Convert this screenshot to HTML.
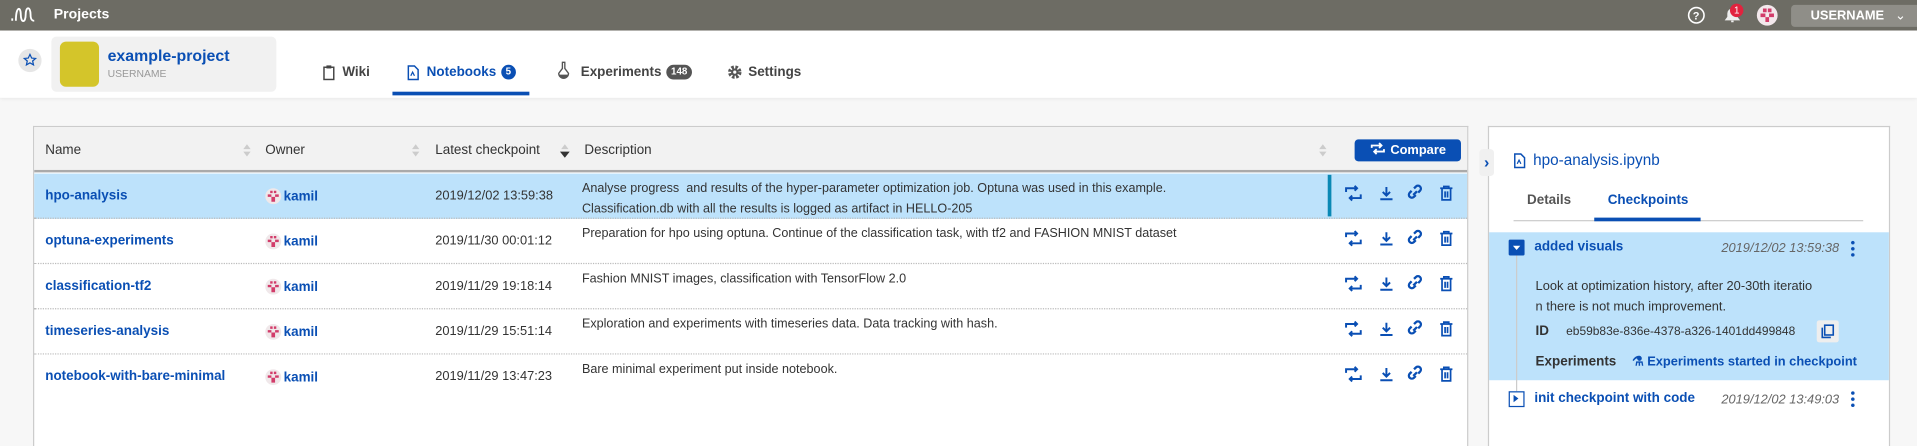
<!DOCTYPE html>
<html><head><meta charset="utf-8">
<style>
*{box-sizing:border-box;margin:0;padding:0}
html,body{width:1917px;height:445px;overflow:hidden;background:#f7f7f7}
#w{position:absolute;left:0;top:0;width:1568px;height:364px;transform:scale(1.22258);transform-origin:0 0;font-family:"Liberation Sans",sans-serif;font-size:11px;color:#333}
.abs{position:absolute}
.top{left:0;top:0;width:1568px;height:25px;background:#6d6c64;color:#fff}
.hdr{left:0;top:25px;width:1568px;height:55px;background:#fff;box-shadow:0 1px 3px rgba(0,0,0,.08)}
.lnk{color:#0a4fb4;font-weight:bold}
.tbl{left:27px;top:103px;width:1174px;height:262px;background:#fff;border:1px solid #ccc;border-bottom:none}
.th{left:0;top:0;width:1172px;height:37px;background:#f2f2f2;border-bottom:2px solid #aaa}
.row{left:0;width:1172px;height:37px;border-bottom:1px dotted #bbb}
.sel{background:#bde2fb}
.cell{position:absolute;top:12px;white-space:nowrap}
.desc{position:absolute;left:448px;top:4px;line-height:17px;font-size:10.3px;width:610px}
.sort{position:absolute;top:13px;width:8px;height:12px}
.panel{left:1217px;top:103px;width:329px;height:262px;background:#fff;border:1px solid #ccc;border-bottom:none}
.av{display:inline-block;width:13px;height:13px;border-radius:50%;background:#f0e8ea;vertical-align:-3px;margin-right:2px}
.tab{position:absolute;top:28px;font-weight:bold;white-space:nowrap;font-size:11px}
.bdg{display:inline-block;height:12px;border-radius:6px;color:#fff;font-size:8px;text-align:center;line-height:12px;vertical-align:1px;margin-left:4px}
.dots{position:absolute;width:3px;height:14px;background:radial-gradient(circle,#0a4fb4 1.3px,transparent 1.6px) 0 0/3px 5px}
</style></head><body>
<div id="w">
<div class="abs top">
 <svg class="abs" style="left:9px;top:5px" width="22" height="14" viewBox="0 0 22 14"><path d="M1 12 V10 M4 12 C4 0 8 0 8 7 C8 14 12 14 12 7 C12 0 16 0 16 7 C16 12 18 12 19 12" stroke="#fff" stroke-width="1.5" fill="none"/></svg>
 <div class="abs" style="left:44px;top:6px;font-weight:bold;font-size:11.5px">Projects</div>
 <svg class="abs" style="left:1380px;top:5px" width="15" height="15"><circle cx="7.5" cy="7.5" r="6.3" stroke="#fff" stroke-width="1.3" fill="none"/><text x="4.6" y="11" font-size="9" fill="#fff" font-family="Liberation Sans" font-weight="bold">?</text></svg>
 <svg class="abs" style="left:1410px;top:5px" width="14" height="15"><path d="M2 11 H12 L10.5 9 V6 A3.5 3.5 0 0 0 3.5 6 V9Z M6 12.5 H8" stroke="#eee" stroke-width="1.3" fill="#eee"/></svg>
 <div class="abs" style="left:1415px;top:3px;width:11px;height:11px;border-radius:50%;background:#e2233e;font-size:8px;text-align:center;line-height:11px">1</div>
 <div class="abs" style="left:1437px;top:4px;width:17px;height:17px;border-radius:50%;background:#f3e8ec"><svg width="17" height="17"><path d="M5 3h3v3h-3zM9 3h3v3h-3zM3 7h4v3h-4zM10 7h4v3h-4zM7 10h3v4h-3z" fill="#d23c6a"/></svg></div>
 <div class="abs" style="left:1465px;top:4px;width:115px;height:18px;background:#8f8e88;border-radius:3px;font-size:10.5px;font-weight:bold;line-height:18px;padding-left:16px">USERNAME <span style="font-weight:normal;margin-left:6px">&#8964;</span></div>
</div>
<div class="abs hdr">
 <div class="abs" style="left:15px;top:15px;width:19px;height:19px;border-radius:50%;background:#e6e6e6"><svg width="19" height="19"><path d="M9.5 4.5l1.4 3 3.2.3-2.4 2.1.7 3.2-2.9-1.7-2.9 1.7.7-3.2L4.9 7.8l3.2-.3z" fill="none" stroke="#0a4fb4" stroke-width="1"/></svg></div>
 <div class="abs" style="left:42px;top:5px;width:184px;height:45px;background:#f1f1f1;border-radius:4px"></div>
 <div class="abs" style="left:49px;top:9px;width:32px;height:37px;background:#d4c52a;border-radius:5px"></div>
 <div class="abs lnk" style="left:88px;top:13px;font-size:13px">example-project</div>
 <div class="abs" style="left:88px;top:30px;font-size:8.5px;color:#999">USERNAME</div>
 <svg class="abs" style="left:264px;top:28px" width="10" height="13"><rect x="1" y="2" width="8" height="10" fill="none" stroke="#444" stroke-width="1.2"/><rect x="3" y="0.5" width="4" height="2.5" fill="#444"/></svg>
 <div class="tab" style="left:280px;color:#444">Wiki</div>
 <svg class="abs" style="left:333px;top:28px" width="10" height="13"><path d="M1 1h5l3 3v8h-8z" fill="none" stroke="#0a4fb4" stroke-width="1.2"/><path d="M3 9l1.5-3 1.5 3" stroke="#0a4fb4" fill="none"/></svg>
 <div class="tab lnk" style="left:349px">Notebooks<span class="bdg" style="width:12px;background:#0a4fb4;font-weight:bold">5</span></div>
 <div class="abs" style="left:321px;top:50px;width:112px;height:3px;background:#0a4fb4"></div>
 <svg class="abs" style="left:455px;top:25px" width="12" height="16"><path d="M4.5 1h3M5 1v5L2 10a4 4 0 1 0 8 0L7 6V1" fill="none" stroke="#555" stroke-width="1.1"/><path d="M2.5 11h7a3.5 3.5 0 0 1-7 0z" fill="#555"/></svg>
 <div class="tab" style="left:475px;color:#444">Experiments<span class="bdg" style="width:21px;background:#555">148</span></div>
 <svg class="abs" style="left:595px;top:28px" width="12" height="12"><circle cx="6" cy="6" r="4" fill="none" stroke="#555" stroke-width="3" stroke-dasharray="2 1.2"/><circle cx="6" cy="6" r="3" fill="#555"/><circle cx="6" cy="6" r="1.3" fill="#fff"/></svg>
 <div class="tab" style="left:612px;color:#444">Settings</div>
</div>

<div class="abs tbl">
 <div class="abs th">
  <div class="cell" style="left:9px;top:13px">Name</div>
  <div class="cell" style="left:189px;top:13px">Owner</div>
  <div class="cell" style="left:328px;top:13px">Latest checkpoint</div>
  <div class="cell" style="left:450px;top:13px">Description</div>
  <svg class="sort" style="left:170px"><path d="M1 5l3-4 3 4zM1 7l3 4 3-4z" fill="#ccc"/></svg>
  <svg class="sort" style="left:308px"><path d="M1 5l3-4 3 4zM1 7l3 4 3-4z" fill="#ccc"/></svg>
  <svg class="sort" style="left:430px"><path d="M1 5l3-4 3 4z" fill="#ccc"/><path d="M0 7l4 5 4-5z" fill="#333"/></svg>
  <svg class="sort" style="left:1050px"><path d="M1 5l3-4 3 4zM1 7l3 4 3-4z" fill="#ccc"/></svg>
  <div class="abs" style="left:1080px;top:10px;width:87px;height:18px;background:#0a4fb4;border-radius:3px;color:#fff;font-weight:bold;font-size:10.5px;line-height:18px;text-align:center"><svg width="14" height="11" style="vertical-align:-1px"><path d="M2 5V3h8M8 1l2 2-2 2M12 6v2H4M6 6l-2 2 2 2" fill="none" stroke="#fff" stroke-width="1.5"/></svg> Compare</div>
 </div>
 <div class="abs row sel" style="top:38px">
  <div class="cell lnk" style="left:9px">hpo-analysis</div>
  <div class="cell lnk" style="left:189px"><span class="av"><svg width="13" height="13"><path d="M4 2h2v2h-2zM7 2h2v2h-2zM2 5h3v2h-3zM8 5h3v2h-3zM5 7h3v4h-3z" fill="#d23c6a"/></svg></span>kamil</div>
  <div class="cell" style="left:328px;font-size:10.5px">2019/12/02 13:59:38</div>
  <div class="desc">Analyse progress &nbsp;and results of the hyper-parameter optimization job. Optuna was used in this example.<br>Classification.db with all the results is logged as artifact in HELLO-205</div>
  <div class="abs" style="left:1058px;top:1px;width:3px;height:34px;background:#0a88b4"></div>
 </div>
 <div class="abs row" style="top:75px">
  <div class="cell lnk" style="left:9px">optuna-experiments</div>
  <div class="cell lnk" style="left:189px"><span class="av"><svg width="13" height="13"><path d="M4 2h2v2h-2zM7 2h2v2h-2zM2 5h3v2h-3zM8 5h3v2h-3zM5 7h3v4h-3z" fill="#d23c6a"/></svg></span>kamil</div>
  <div class="cell" style="left:328px;font-size:10.5px">2019/11/30 00:01:12</div>
  <div class="desc">Preparation for hpo using optuna. Continue of the classification task, with tf2 and FASHION MNIST dataset</div>
 </div>
 <div class="abs row" style="top:112px">
  <div class="cell lnk" style="left:9px">classification-tf2</div>
  <div class="cell lnk" style="left:189px"><span class="av"><svg width="13" height="13"><path d="M4 2h2v2h-2zM7 2h2v2h-2zM2 5h3v2h-3zM8 5h3v2h-3zM5 7h3v4h-3z" fill="#d23c6a"/></svg></span>kamil</div>
  <div class="cell" style="left:328px;font-size:10.5px">2019/11/29 19:18:14</div>
  <div class="desc">Fashion MNIST images, classification with TensorFlow 2.0</div>
 </div>
 <div class="abs row" style="top:149px">
  <div class="cell lnk" style="left:9px">timeseries-analysis</div>
  <div class="cell lnk" style="left:189px"><span class="av"><svg width="13" height="13"><path d="M4 2h2v2h-2zM7 2h2v2h-2zM2 5h3v2h-3zM8 5h3v2h-3zM5 7h3v4h-3z" fill="#d23c6a"/></svg></span>kamil</div>
  <div class="cell" style="left:328px;font-size:10.5px">2019/11/29 15:51:14</div>
  <div class="desc">Exploration and experiments with timeseries data. Data tracking with hash.</div>
 </div>
 <div class="abs row" style="top:186px;border-bottom:none">
  <div class="cell lnk" style="left:9px">notebook-with-bare-minimal</div>
  <div class="cell lnk" style="left:189px"><span class="av"><svg width="13" height="13"><path d="M4 2h2v2h-2zM7 2h2v2h-2zM2 5h3v2h-3zM8 5h3v2h-3zM5 7h3v4h-3z" fill="#d23c6a"/></svg></span>kamil</div>
  <div class="cell" style="left:328px;font-size:10.5px">2019/11/29 13:47:23</div>
  <div class="desc">Bare minimal experiment put inside notebook.</div>
 </div>
</div>

<svg class="abs" style="left:1095px;top:141px" width="100" height="190">
 <defs>
  <g id="ic" fill="none" stroke="#0a4fb4" stroke-width="1.6">
   <path d="M6 17v-3h9M13 12l2 2-2 2M18 19v3H9M11 20l-2 2 2 2" transform="translate(0,-1)"/>
   <path d="M39 12v7M36 16l3 3 3-3M34 22h10"/>
   <path d="M63 18.5l-1.5 1.5a2.4 2.4 0 0 1-3.4-3.4l1.5-1.5M65 16.5l1.5-1.5a2.4 2.4 0 0 0-3.4-3.4l-1.5 1.5M61 18.5l3-3" stroke-width="1.9"/>
   <path d="M83 13h10M86 13v-1.5h4V13M84.5 13.5v9h7v-9M87 15.5v5M89 15.5v5" stroke-width="1.4"/>
  </g>
 </defs>
 <use href="#ic" y="0"/><use href="#ic" y="37"/><use href="#ic" y="74"/><use href="#ic" y="111"/><use href="#ic" y="148"/>
</svg>

<div class="abs panel">
 <div class="abs" style="left:-8px;top:18px;width:12px;height:22px;background:#f0f0f0;border-radius:3px;color:#0a4fb4;font-size:13px;line-height:21px;text-align:center;font-weight:bold">&#8250;</div>
 <svg class="abs" style="left:20px;top:21px" width="10" height="13"><path d="M1 1h5l3 3v8h-8z" fill="none" stroke="#0a4fb4" stroke-width="1.2"/><path d="M3 9l1.5-3 1.5 3" stroke="#0a4fb4" fill="none"/></svg>
 <div class="abs" style="left:36px;top:20px;font-size:12.5px;color:#0a4fb4">hpo-analysis.ipynb</div>
 <div class="abs" style="left:31px;top:54px;color:#555;font-weight:bold">Details</div>
 <div class="abs lnk" style="left:97px;top:54px">Checkpoints</div>
 <div class="abs" style="left:20px;top:76px;width:286px;height:1px;background:#ccc"></div>
 <div class="abs" style="left:86px;top:74px;width:87px;height:3px;background:#0a4fb4"></div>
 <div class="abs" style="left:0px;top:86px;width:327px;height:121px;background:#bde2fb"></div>
 <div class="abs" style="left:22px;top:100px;width:1px;height:120px;background:#ccc"></div>
 <div class="abs" style="left:16px;top:92px;width:13px;height:13px;background:#0a4fb4;border-radius:1px"><svg width="13" height="13"><path d="M3.5 5h6l-3 3.5z" fill="#fff"/></svg></div>
 <div class="abs lnk" style="left:37px;top:92px">added visuals</div>
 <div class="abs" style="left:190px;top:93px;font-style:italic;color:#666;font-size:10.5px">2019/12/02 13:59:38</div>
 <div class="dots" style="left:296px;top:92px"></div>
 <div class="abs" style="left:38px;top:122px;font-size:10.5px;line-height:17px;white-space:nowrap">Look at optimization history, after 20-30th iteratio<br>n there is not much improvement.</div>
 <div class="abs" style="left:38px;top:161px;font-weight:bold">ID</div>
 <div class="abs" style="left:63px;top:162px;font-size:9.8px;white-space:nowrap">eb59b83e-836e-4378-a326-1401dd499848</div>
 <div class="abs" style="left:268px;top:158px;width:18px;height:18px;background:#eee;border-radius:2px"><svg width="18" height="18"><rect x="6.5" y="4" width="7" height="8" fill="none" stroke="#0a4fb4" stroke-width="1.3"/><path d="M4.5 6v8h7" fill="none" stroke="#0a4fb4" stroke-width="1.3"/></svg></div>
 <div class="abs" style="left:38px;top:186px;font-weight:bold">Experiments</div>
 <div class="abs lnk" style="left:117px;top:186px;font-size:10.5px;white-space:nowrap">&#9879; Experiments started in checkpoint</div>
 <div class="abs" style="left:16px;top:216px;width:13px;height:13px;border:1.5px solid #0a4fb4;background:#fff"><svg width="10" height="10"><path d="M3 2v6l4-3z" fill="#0a4fb4"/></svg></div>
 <div class="abs lnk" style="left:37px;top:216px">init checkpoint with code</div>
 <div class="abs" style="left:190px;top:217px;font-style:italic;color:#666;font-size:10.5px">2019/12/02 13:49:03</div>
 <div class="dots" style="left:296px;top:215px"></div>
</div>
</div>
</body></html>
